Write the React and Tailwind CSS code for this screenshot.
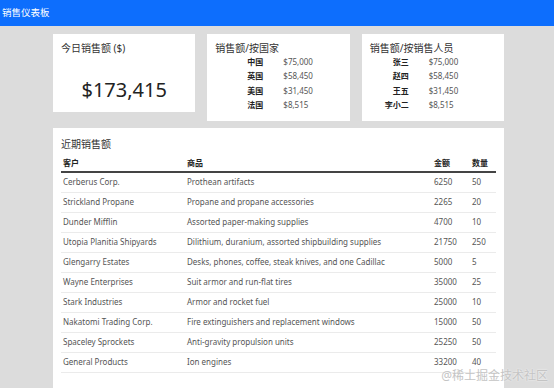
import React from "react";

const byCountry = [
  ["中国", "$75,000"],
  ["英国", "$58,450"],
  ["美国", "$31,450"],
  ["法国", "$8,515"],
];

const byPerson = [
  ["张三", "$75,000"],
  ["赵四", "$58,450"],
  ["王五", "$31,450"],
  ["李小二", "$8,515"],
];

const sales = [
  ["Cerberus Corp.", "Prothean artifacts", 6250, 50],
  ["Strickland Propane", "Propane and propane accessories", 2265, 20],
  ["Dunder Mifflin", "Assorted paper-making supplies", 4700, 10],
  ["Utopia Planitia Shipyards", "Dilithium, duranium, assorted shipbuilding supplies", 21750, 250],
  ["Glengarry Estates", "Desks, phones, coffee, steak knives, and one Cadillac", 5000, 5],
  ["Wayne Enterprises", "Suit armor and run-flat tires", 35000, 25],
  ["Stark Industries", "Armor and rocket fuel", 25000, 10],
  ["Nakatomi Trading Corp.", "Fire extinguishers and replacement windows", 15000, 50],
  ["Spaceley Sprockets", "Anti-gravity propulsion units", 25250, 50],
  ["General Products", "Ion engines", 33200, 40],
];

const font = { fontFamily: '"Noto Sans", "Noto Sans CJK SC", sans-serif' };

// 小卡片里的两列表格
const MiniTable = ({ title, rows, labelWidth }) => (
  <div className="flex-1 h-[87px] bg-white px-2 pt-[7px]">
    <div className="text-[10px] leading-[14px] text-[#333]">{title}</div>
    <div className="flex flex-col">
      {rows.map(([label, value]) => (
        <div key={label} className="flex h-[14.3px] items-center text-[8px]">
          <span className={`${labelWidth} text-right font-bold text-[#222]`}>{label}</span>
          <span className="ml-5 text-[#555]">{value}</span>
        </div>
      ))}
    </div>
  </div>
);

export default function App() {
  return (
    <div className="relative h-[388px] w-[554px] overflow-hidden bg-[#dcdcdc]" style={font}>
      {/* Header */}
      <div className="flex h-[26px] items-center bg-[#0d6efd] pl-[2px] text-[9.5px] text-white">
        销售仪表板
      </div>

      <div className="flex w-[451px] flex-col gap-[7px] pl-[53px] pt-2 box-content">
        {/* 统计卡片 */}
        <div className="flex items-start gap-3">
          <div className="flex h-[78px] flex-1 flex-col bg-white px-2 pt-[7px]">
            <div className="text-[10px] leading-[14px] text-[#333]">今日销售额 ($)</div>
            <div className="flex flex-1 items-center justify-center pt-[13px] text-[20px] text-[#222]">
              $173,415
            </div>
          </div>
          <MiniTable title="销售额/按国家" rows={byCountry} labelWidth="w-[48px]" />
          <MiniTable title="销售额/按销售人员" rows={byPerson} labelWidth="w-[39px]" />
        </div>

        {/* 近期销售额 */}
        <div className="h-[260px] bg-white px-2 pt-[9px]">
          <div className="text-[10px] leading-[14px] text-[#333]">近期销售额</div>
          <table className="w-full table-fixed border-collapse text-[8px]">
            <colgroup>
              <col className="w-[124px]" />
              <col className="w-[247px]" />
              <col className="w-[38px]" />
              <col />
            </colgroup>
            <thead>
              <tr className="h-[21px] border-b-2 border-[#444] text-left font-bold text-[#222]">
                <th className="px-0.5 pt-1">客户</th>
                <th className="px-0.5 pt-1">商品</th>
                <th className="px-0.5 pt-1">金额</th>
                <th className="px-0.5 pt-1">数量</th>
              </tr>
            </thead>
            <tbody className="text-[#555]">
              {sales.map(([customer, product, amount, qty]) => (
                <tr key={customer} className="h-5 border-b border-[#ebebeb]">
                  <td className="truncate px-0.5">{customer}</td>
                  <td className="truncate px-0.5">{product}</td>
                  <td className="px-0.5">{amount}</td>
                  <td className="px-0.5">{qty}</td>
                </tr>
              ))}
            </tbody>
          </table>
        </div>
      </div>

      {/* 水印 */}
      <div className="absolute bottom-[3px] right-[6px] text-[12px] text-[#c4c4c4] [text-shadow:0_0_2px_#fff]">
        @稀土掘金技术社区
      </div>
    </div>
  );
}
